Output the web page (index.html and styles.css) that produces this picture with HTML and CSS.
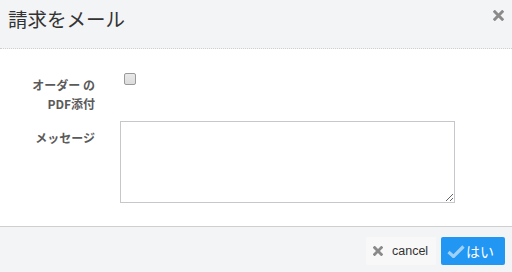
FILE: index.html
```html
<!DOCTYPE html>
<html lang="ja">
<head>
<meta charset="utf-8">
<link rel="stylesheet" href="styles.css">
</head>
<body>
<div class="modal">
  <div class="modal-header">
    <h4 class="title">請求をメール</h4>
    <span class="close" aria-label="close">
      <svg width="11" height="11" viewBox="0 0 11 11"><path d="M1.8 1.8 L9.2 9.2 M9.2 1.8 L1.8 9.2" stroke="#8a8a8a" stroke-width="3" stroke-linecap="square"/></svg>
    </span>
  </div>
  <div class="modal-body">
    <div class="row row-check">
      <label class="label">オーダー の<br>PDF添付</label>
      <div class="field"><span class="checkbox"></span></div>
    </div>
    <div class="row row-msg">
      <label class="label">メッセージ</label>
      <div class="field"><textarea class="textarea"></textarea></div>
    </div>
  </div>
  <div class="modal-footer">
    <button class="btn btn-cancel">
      <svg width="10" height="10" viewBox="0 0 10 10"><path d="M1.6 1.6 L8.4 8.4 M8.4 1.6 L1.6 8.4" stroke="#8a8a8a" stroke-width="2.8" stroke-linecap="square"/></svg>
      <span>cancel</span>
    </button>
    <button class="btn btn-ok">
      <svg width="18" height="13" viewBox="0 0 18 13"><path d="M1.5 7 L6.5 11.5 L16.5 1.5" fill="none" stroke="#9fd0fa" stroke-width="3.2" stroke-linejoin="miter"/></svg>
      <span>はい</span>
    </button>
  </div>
</div>
</body>
</html>
```
FILE: styles.css
```css
html, body {
  margin: 0;
  padding: 0;
  background: #ffffff;
}
body {
  font-family: "Liberation Sans", "Noto Sans CJK JP", sans-serif;
  width: 512px;
  height: 272px;
  overflow: hidden;
}
.modal {
  display: flex;
  flex-direction: column;
  height: 272px;
}
.modal-header {
  height: 48px;
  background: #f3f4f6;
  border-bottom: 1px dotted #cfcfcf;
  display: flex;
  align-items: flex-start;
  justify-content: space-between;
  padding: 0 8px 0 8px;
  box-sizing: content-box;
}
.title {
  margin: 0;
  padding-top: 7px;
  font-family: "Noto Sans CJK JP", sans-serif;
  font-weight: normal;
  font-size: 19.5px;
  line-height: 24px;
  color: #333;
}
.close {
  display: block;
  margin-top: 7px;
}
.modal-body {
  flex: 1;
  background: #fff;
  padding-top: 23px;
}
.row {
  display: flex;
  align-items: flex-start;
}
.label {
  width: 95px;
  text-align: right;
  font-family: "Noto Sans CJK JP", sans-serif;
  font-weight: bold;
  font-size: 12px;
  line-height: 19px;
  color: #5a5a5a;
}
.row-check .label {
  padding-top: 3px;
}
.field {
  padding-left: 25px;
}
.row-check .field {
  padding-left: 29px;
}
.checkbox {
  display: block;
  width: 10px;
  height: 10px;
  margin-top: 1px;
  border: 1px solid #9a9a9a;
  border-radius: 2px;
  background: linear-gradient(#e9e9e9, #dcdcdc);
}
.row-msg {
  margin-top: 8px;
}
.row-msg .label {
  padding-top: 7px;
}
.textarea {
  display: block;
  width: 335px;
  height: 82px;
  box-sizing: border-box;
  border: 1px solid #c4c8cc;
  border-radius: 0;
  background: #fff;
  margin: 0;
  resize: both;
}
.modal-footer {
  height: 46px;
  background: #f3f4f6;
  border-top: 1px solid #cfcfcf;
  display: flex;
  justify-content: flex-end;
  align-items: flex-start;
  padding: 10px 7px 0 0;
  box-sizing: border-box;
  gap: 5px;
}
.btn {
  height: 28px;
  border: none;
  border-radius: 2px;
  display: flex;
  align-items: center;
  margin: 0;
  cursor: pointer;
}
.btn-cancel {
  width: 70px;
  background: #f8f8f8;
  padding: 0 0 0 7px;
  gap: 9px;
  color: #333;
  font-family: "Liberation Sans", sans-serif;
  font-size: 12.5px;
}
.btn-ok {
  width: 64px;
  background: #2196f3;
  padding: 0 0 0 6px;
  gap: 1px;
  color: #fff;
  font-family: "Noto Sans CJK JP", sans-serif;
  font-size: 14px;
}
```
